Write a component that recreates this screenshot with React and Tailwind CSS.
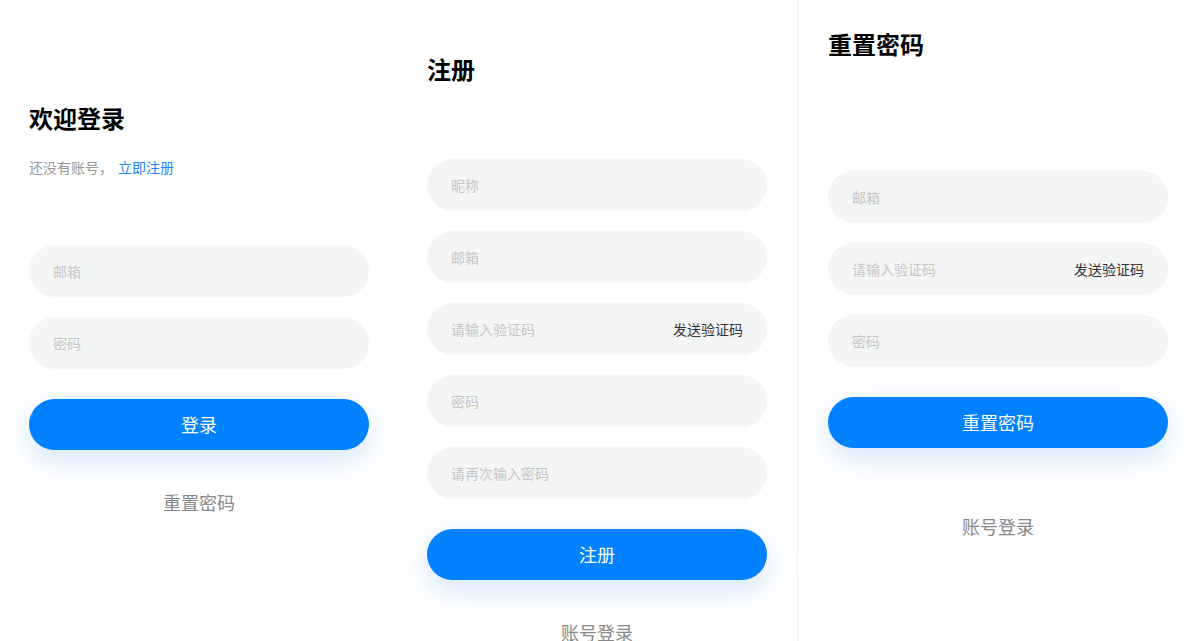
import React from "react";

const FONT = { fontFamily: '"Noto Sans CJK SC", "Noto Sans", sans-serif' };

function Field({ placeholder, type = "text", action }) {
  return (
    <div className="flex h-[52px] w-full items-center rounded-full bg-[#f4f5f5] pl-6 pr-6">
      <input
        type={type}
        placeholder={placeholder}
        className="min-w-0 flex-1 bg-transparent text-[14px] text-[#333] outline-none placeholder:text-[#c6c6c6]"
      />
      {action && (
        <button className="shrink-0 text-[14px] text-[#333]">{action}</button>
      )}
    </div>
  );
}

function PrimaryButton({ children, className = "" }) {
  return (
    <button
      className={`flex h-[51px] w-full items-center justify-center rounded-full bg-[#0081ff] text-[18px] text-white shadow-[0_10px_30px_rgba(0,110,230,0.18)] ${className}`}
    >
      {children}
    </button>
  );
}

function Title({ children }) {
  return (
    <h2 className="text-[24px] font-bold leading-[32px] text-black">
      {children}
    </h2>
  );
}

function TextLink({ children, className = "" }) {
  return (
    <a className={`block text-center text-[18px] leading-[24px] text-[#888] ${className}`}>
      {children}
    </a>
  );
}

function LoginPanel() {
  return (
    <section className="pl-[29px] pt-[102px]">
      <div className="w-[340px]">
        <Title>欢迎登录</Title>
        <p className="mt-[23px] text-[14px] leading-[20px] text-[#999]">
          还没有账号，
          <a className="ml-[5px] text-[#1a86ff]">立即注册</a>
        </p>
        <div className="mt-[68px] flex flex-col gap-5">
          <Field placeholder="邮箱" />
          <Field placeholder="密码" type="password" />
        </div>
        <PrimaryButton className="mt-[30px]">登录</PrimaryButton>
        <TextLink className="mt-[40px]">重置密码</TextLink>
      </div>
    </section>
  );
}

function RegisterPanel() {
  return (
    <section className="pl-[29px] pt-[53px]">
      <div className="w-[340px]">
        <Title>注册</Title>
        <div className="mt-[74px] flex flex-col gap-5">
          <Field placeholder="昵称" />
          <Field placeholder="邮箱" />
          <Field placeholder="请输入验证码" action="发送验证码" />
          <Field placeholder="密码" type="password" />
          <Field placeholder="请再次输入密码" type="password" />
        </div>
        <PrimaryButton className="mt-[30px]">注册</PrimaryButton>
        <TextLink className="mt-[40px]">账号登录</TextLink>
      </div>
    </section>
  );
}

function ResetPanel() {
  return (
    <section className="border-l border-[#f0f0f0] pl-[30px] pt-[28px]">
      <div className="w-[340px]">
        <Title>重置密码</Title>
        <div className="mt-[111px] flex flex-col gap-5">
          <Field placeholder="邮箱" />
          <Field placeholder="请输入验证码" action="发送验证码" />
          <Field placeholder="密码" type="password" />
        </div>
        <PrimaryButton className="mt-[30px]">重置密码</PrimaryButton>
        <TextLink className="mt-[66px]">账号登录</TextLink>
      </div>
    </section>
  );
}

export default function App() {
  return (
    <div
      className="grid h-[641px] w-[1196px] grid-cols-[398px_399px_399px] overflow-hidden bg-white"
      style={FONT}
    >
      <LoginPanel />
      <RegisterPanel />
      <ResetPanel />
    </div>
  );
}
